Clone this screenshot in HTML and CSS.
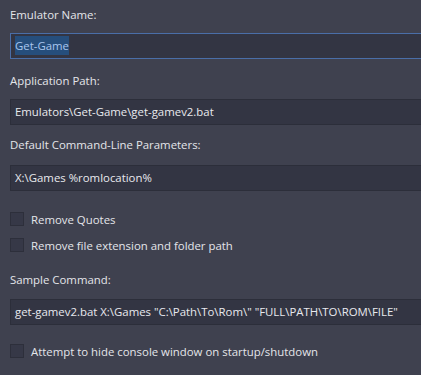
FILE: index.html
```html
<!DOCTYPE html>
<html>
<head>
<meta charset="utf-8">
<link rel="stylesheet" href="styles.css">
</head>
<body>
<div class="form">
  <div class="label l1">Emulator Name:</div>
  <div class="input focus"><span class="sel">Get-Game</span></div>
  <div class="label l2">Application Path:</div>
  <div class="input">Emulators\Get-Game\get-gamev2.bat</div>
  <div class="label l3">Default Command-Line Parameters:</div>
  <div class="input">X:\Games %romlocation%</div>
  <div class="check c1"><span class="box"></span><span>Remove Quotes</span></div>
  <div class="check c2"><span class="box"></span><span>Remove file extension and folder path</span></div>
  <div class="label l4">Sample Command:</div>
  <div class="input">get-gamev2.bat X:\Games "C:\Path\To\Rom\" "FULL\PATH\TO\ROM\FILE"</div>
  <div class="check c3"><span class="box"></span><span>Attempt to hide console window on startup/shutdown</span></div>
</div>
</body>
</html>
```
FILE: styles.css
```css
html, body {
  margin: 0;
  padding: 0;
  background: #3f414f;
  width: 421px;
  height: 375px;
  overflow: hidden;
}
.form {
  display: flex;
  flex-direction: column;
  padding-left: 10px;
  font-family: "Open Sans", "Noto Sans", sans-serif;
  font-size: 11.4px;
  color: #e4e5ea;
}
.label {
  height: 16px;
  line-height: 16px;
  white-space: nowrap;
}
.l1 { margin-top: 7px; margin-bottom: 10px; }
.l2 { margin-top: 14px; margin-bottom: 10px; }
.l3 { margin-top: 12px; margin-bottom: 12px; }
.l4 { margin-top: 19px; margin-bottom: 11px; }
.input {
  box-sizing: border-box;
  height: 26px;
  width: 411px;
  background: #333543;
  border: 1px solid #2c2e3a;
  border-right: none;
  padding-left: 4px;
  line-height: 24px;
  white-space: nowrap;
  overflow: hidden;
  color: #e8e9ee;
}
.input.focus {
  border-color: #4a6ea8;
  color: #a9c6ee;
}
.sel {
  background: #264e7c;
  padding: 2px 0;
}
.check {
  display: flex;
  align-items: center;
  gap: 7px;
  height: 16px;
  white-space: nowrap;
}
.c1 { margin-top: 20px; }
.c2 { margin-top: 10px; }
.c3 { margin-top: 18px; }
.box {
  box-sizing: border-box;
  width: 14px;
  height: 14px;
  background: #363847;
  border: 1px solid #2d2f3b;
  flex: none;
}
```
